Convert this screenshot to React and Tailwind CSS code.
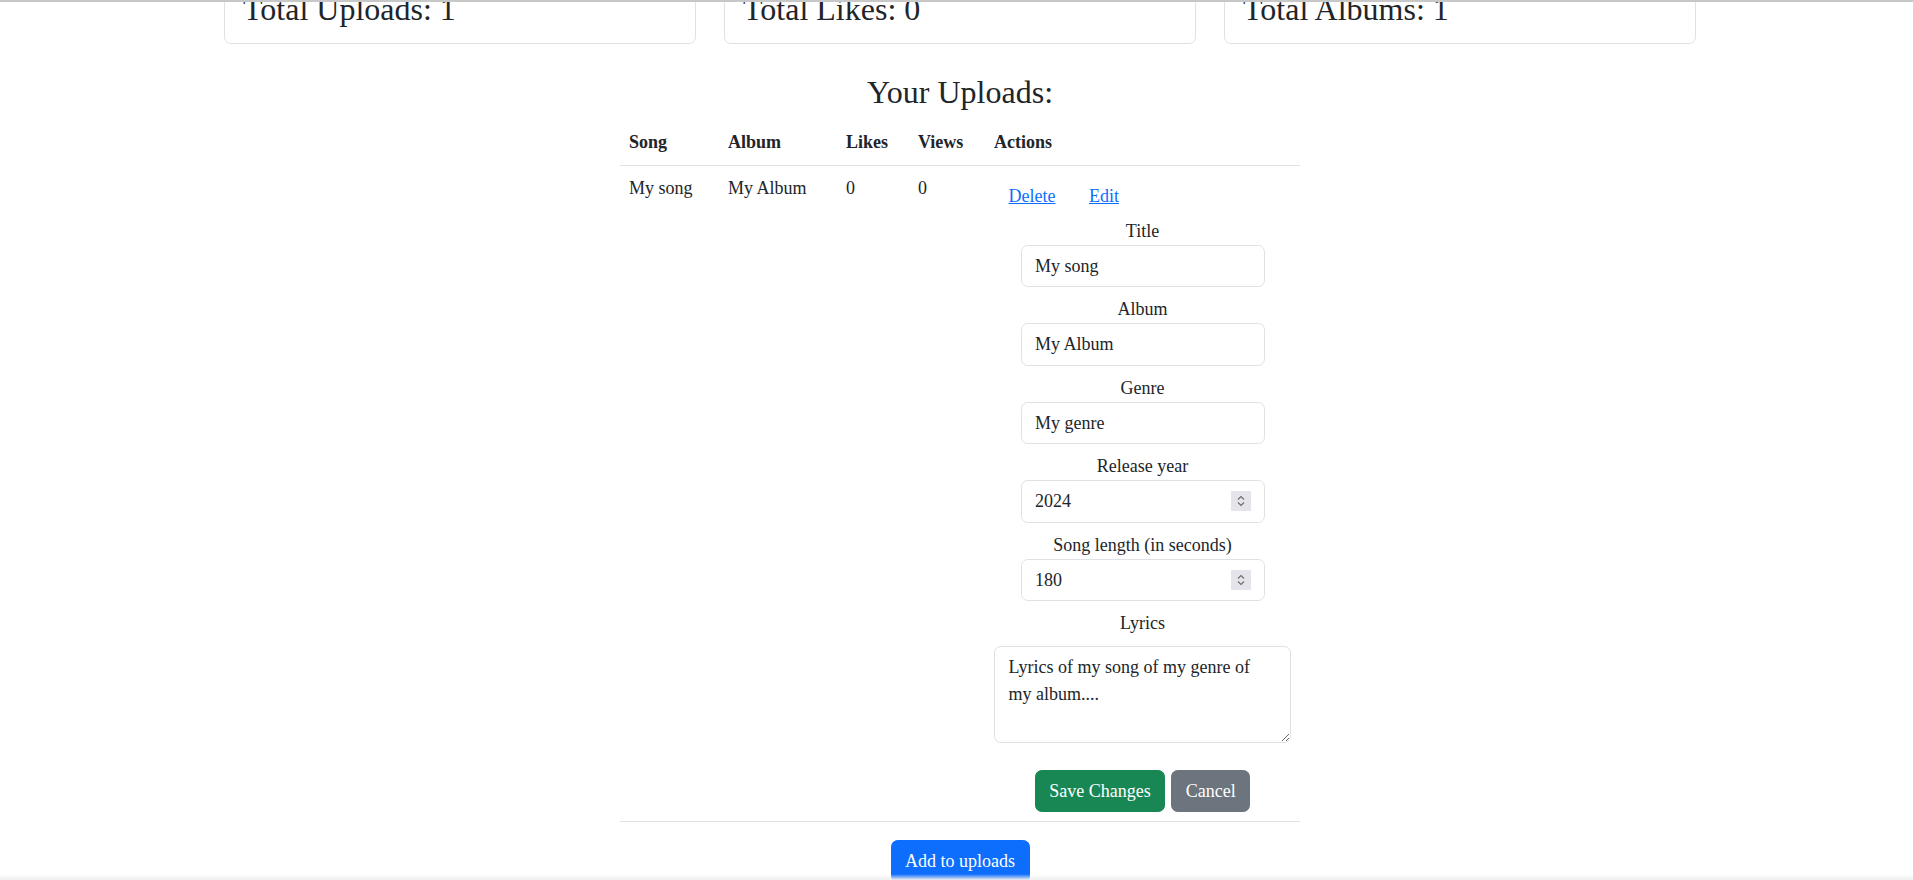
import React, { useState } from "react";

const stats = [
  { label: "Total Uploads", value: 1 },
  { label: "Total Likes", value: 0 },
  { label: "Total Albums", value: 1 },
];

const Spinner = () => (
  <span className="pointer-events-none absolute right-[14px] top-[11px] flex h-[20px] w-[20px] items-center justify-center bg-[#e4e4ea]">
    <svg width="20" height="20" viewBox="0 0 20 20" fill="none">
      <path d="M7 8.5 L10 5.5 L13 8.5" stroke="#6e6e6e" strokeWidth="1.2" />
      <path d="M7 11.5 L10 14.5 L13 11.5" stroke="#6e6e6e" strokeWidth="1.2" />
    </svg>
  </span>
);

const inputCls =
  "block w-full rounded-[6.75px] border border-[#dee2e6] bg-white px-[13.5px] py-[6.75px] text-left leading-[1.5] text-[#212529] outline-none";

const App = () => {
  const [song, setSong] = useState({
    title: "My song",
    album: "My Album",
    genre: "My genre",
    year: "2024",
    length: "180",
    lyrics: "Lyrics of my song of my genre of my album....",
  });

  const update = (key) => (e) => setSong({ ...song, [key]: e.target.value });

  return (
    <div className="min-h-screen bg-white pl-[7px] font-['Liberation_Serif',serif] text-[18px] leading-[1.5] text-[#212529]">
      {/* top edge of the navbar */}
      <div className="fixed left-0 right-0 top-0 z-10 h-[2px] bg-[#c8c8c8]" />

      <div className="mx-auto mt-[-31px] flex w-[1472px] gap-[28px]">
        {stats.map((s) => (
          <div
            key={s.label}
            className="flex-1 rounded-[6.75px] border border-[#dee2e6] px-[18px] pb-[15px] pt-[20px]"
          >
            <h2 className="text-[32px] leading-[38px]">
              {s.label}: {s.value}
            </h2>
          </div>
        ))}
      </div>

      <h2 className="mx-auto mb-[9px] mt-[29px] text-center text-[32px] leading-[1.2]">
        Your Uploads:
      </h2>

      <table className="mx-auto w-[680px] table-fixed border-collapse">
        <thead>
          <tr className="text-left">
            <th className="w-[99px] border-b border-[#dee2e6] p-[9px] font-bold">Song</th>
            <th className="w-[118px] border-b border-[#dee2e6] p-[9px] font-bold">Album</th>
            <th className="w-[72px] border-b border-[#dee2e6] p-[9px] font-bold">Likes</th>
            <th className="w-[76px] border-b border-[#dee2e6] p-[9px] font-bold">Views</th>
            <th className="w-[315px] border-b border-[#dee2e6] p-[9px] font-bold">Actions</th>
          </tr>
        </thead>
        <tbody>
          <tr className="align-top">
            <td className="border-b border-[#dee2e6] p-[9px]">My song</td>
            <td className="border-b border-[#dee2e6] p-[9px]">My Album</td>
            <td className="border-b border-[#dee2e6] p-[9px]">0</td>
            <td className="border-b border-[#dee2e6] p-[9px]">0</td>
            <td className="border-b border-[#dee2e6] p-[9px]">
              <div className="h-[42.5px] whitespace-nowrap">
                <button className="inline-block border border-transparent px-[13.5px] py-[6.75px] align-middle leading-[1.5] text-[#0d6efd] underline">
                  Delete
                </button>{" "}
                <button className="inline-block border border-transparent px-[13.5px] py-[6.75px] align-middle leading-[1.5] text-[#0d6efd] underline">
                  Edit
                </button>
              </div>

              <form className="text-center" onSubmit={(e) => e.preventDefault()}>
                <label className="block">Title</label>
                <div className="mx-auto mb-[9px] w-[244px]">
                  <input className={inputCls} value={song.title} onChange={update("title")} />
                </div>

                <label className="block">Album</label>
                <div className="mx-auto mb-[9px] w-[244px]">
                  <input className={inputCls} value={song.album} onChange={update("album")} />
                </div>

                <label className="block">Genre</label>
                <div className="mx-auto mb-[9px] w-[244px]">
                  <input className={inputCls} value={song.genre} onChange={update("genre")} />
                </div>

                <label className="block">Release year</label>
                <div className="relative mx-auto mb-[9px] w-[244px]">
                  <input
                    className={inputCls}
                    inputMode="numeric"
                    value={song.year}
                    onChange={update("year")}
                  />
                  <Spinner />
                </div>

                <label className="block">Song length (in seconds)</label>
                <div className="relative mx-auto mb-[9px] w-[244px]">
                  <input
                    className={inputCls}
                    inputMode="numeric"
                    value={song.length}
                    onChange={update("length")}
                  />
                  <Spinner />
                </div>

                <label className="block">Lyrics</label>
                <textarea
                  rows={3}
                  className={`${inputCls} mt-[9px]`}
                  value={song.lyrics}
                  onChange={update("lyrics")}
                />

                <div className="mt-[27px] flex justify-center gap-[6px]">
                  <button className="rounded-[6.75px] border border-[#198754] bg-[#198754] px-[13.5px] py-[6.75px] leading-[1.5] text-white">
                    Save Changes
                  </button>
                  <button
                    type="button"
                    className="rounded-[6.75px] border border-[#6c757d] bg-[#6c757d] px-[13.5px] py-[6.75px] leading-[1.5] text-white"
                  >
                    Cancel
                  </button>
                </div>
              </form>
            </td>
          </tr>
        </tbody>
      </table>

      <div className="mt-[18px] flex justify-center">
        <button className="rounded-[6.75px] border border-[#0d6efd] bg-[#0d6efd] px-[13.5px] py-[6.75px] leading-[1.5] text-white">
          Add to uploads
        </button>
      </div>

      {/* shadow of the fixed footer below */}
      <div className="fixed bottom-0 left-0 right-0 z-10 h-[6px] bg-linear-to-t from-[#f0f0f0] to-transparent" />
    </div>
  );
};

export default App;
